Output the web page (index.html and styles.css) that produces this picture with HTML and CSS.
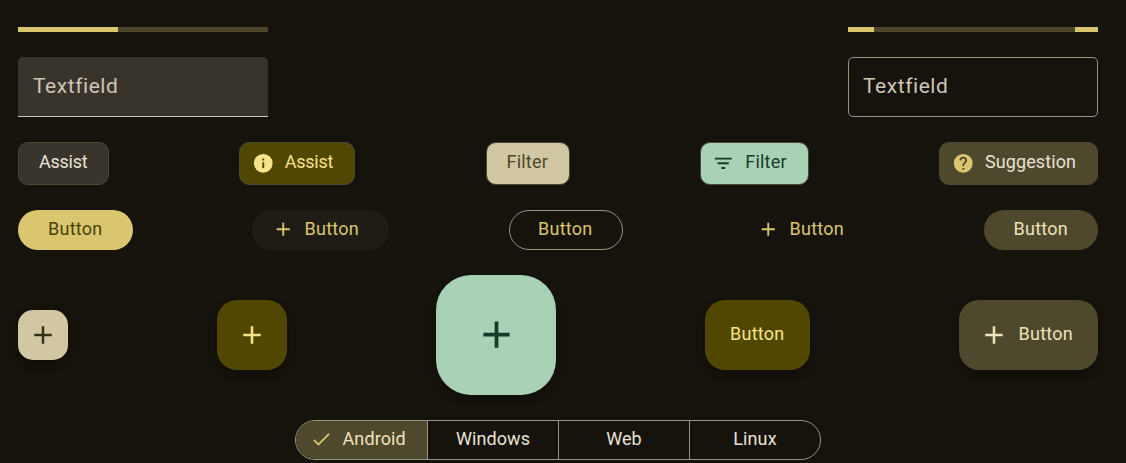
FILE: index.html
```html
<!DOCTYPE html>
<html lang="en">
<head>
<meta charset="utf-8">
<title>Components</title>
<link rel="stylesheet" href="styles.css">
</head>
<body>
<svg class="defs" aria-hidden="true">
  <symbol id="plus" viewBox="0 0 24 24"><path d="M19 13h-6v6h-2v-6H5v-2h6V5h2v6h6z"/></symbol>
  <symbol id="info" viewBox="0 0 24 24"><path fill-rule="evenodd" d="M12 2a10 10 0 1 0 0 20 10 10 0 0 0 0-20zm1 15h-2v-6h2v6zm0-8h-2V7h2v2z"/></symbol>
  <symbol id="help" viewBox="0 0 24 24"><path fill-rule="evenodd" d="M12 2a10 10 0 1 0 0 20 10 10 0 0 0 0-20zm1 17h-2v-2h2v2zm2.07-7.75-.9.92C13.45 12.9 13 13.5 13 15h-2v-.5c0-1.1.45-2.1 1.17-2.83l1.24-1.26c.37-.36.59-.86.59-1.41a2 2 0 0 0-4 0H8a4 4 0 0 1 8 0c0 .88-.36 1.68-.93 2.25z"/></symbol>
  <symbol id="filter" viewBox="0 0 24 24"><path d="M10 18h4v-2h-4v2zM3 6v2h18V6H3zm3 7h12v-2H6v2z"/></symbol>
  <symbol id="check" viewBox="0 0 24 24"><path d="M9 16.17 4.83 12l-1.42 1.41L9 19 21 7l-1.41-1.41z"/></symbol>
</svg>
<main class="page">
  <div class="row">
    <div class="progress"><i class="bar"></i></div>
    <div class="progress"><i class="bar start"></i><i class="bar end"></i></div>
  </div>
  <div class="row">
    <div class="field filled"><span>Textfield</span></div>
    <div class="field outlined"><span>Textfield</span></div>
  </div>
  <div class="row">
    <div class="chip assist"><span>Assist</span></div>
    <div class="chip assist-tinted"><svg><use href="#info"/></svg><span>Assist</span></div>
    <div class="chip filter"><span>Filter</span></div>
    <div class="chip filter-tinted"><svg><use href="#filter"/></svg><span>Filter</span></div>
    <div class="chip suggestion"><svg><use href="#help"/></svg><span>Suggestion</span></div>
  </div>
  <div class="row">
    <div class="button primary"><span>Button</span></div>
    <div class="button elevated"><svg><use href="#plus"/></svg><span>Button</span></div>
    <div class="button outline"><span>Button</span></div>
    <div class="button text"><svg><use href="#plus"/></svg><span>Button</span></div>
    <div class="button tonal"><span>Button</span></div>
  </div>
  <div class="row fabs">
    <div class="fab small"><svg><use href="#plus"/></svg></div>
    <div class="fab regular"><svg><use href="#plus"/></svg></div>
    <div class="fab large"><svg><use href="#plus"/></svg></div>
    <div class="fab label-only"><span>Button</span></div>
    <div class="fab extended"><svg><use href="#plus"/></svg><span>Button</span></div>
  </div>
  <div class="segments">
    <div class="segment selected"><svg><use href="#check"/></svg><span>Android</span></div>
    <div class="segment"><span>Windows</span></div>
    <div class="segment"><span>Web</span></div>
    <div class="segment"><span>Linux</span></div>
  </div>
</main>
</body>
</html>
```
FILE: styles.css
```css
* { box-sizing: border-box; }
body {
  margin: 0;
  height: 463px;
  overflow: hidden;
  background: #16130c;
  color: #e8e2d4;
  font: 450 18px/24px Roboto, sans-serif;
}
.defs { display: none; }
svg { flex: none; width: 22.5px; height: 22.5px; fill: currentColor; }
.page { display: flex; flex-direction: column; gap: 25px; padding: 27px 28px 0 18px; }
.row { display: flex; justify-content: space-between; }
.progress { display: flex; justify-content: space-between; width: 250px; height: 5px; background: #4c472b; }
.bar { width: 100px; background: #dac66f; }
.start { width: 25.5px; }
.end { width: 23px; }

.field { width: 250px; height: 60px; padding: 17px 15px; color: #cdc6b4; font-size: 21px; font-weight: 400; letter-spacing: .55px; }
.filled { background: #38342c; border-bottom: 1px solid #cdc6b4; border-radius: 5px 5px 0 0; }
.outlined { border: 1px solid #969180; border-radius: 5px; padding: 16px 14px; }

.chip { display: flex; align-items: center; height: 42.5px; padding: 0 20px; border: 1.25px solid #4b4739; border-radius: 10px; }
.chip span { margin-top: -3px; }
.button span, .fab span { margin-top: -1.5px; letter-spacing: .25px; }
.segment span { margin-top: -1.5px; letter-spacing: .1px; }
.chip svg { margin-right: 10.5px; }
.assist { width: 91px; background: #38342c; letter-spacing: -.25px; }
.assist-tinted { width: 116px; padding-left: 11.5px; background: #514700; color: #f7e388; letter-spacing: -.25px; }
.filter { width: 84px; background: #d1c7a2; color: #4c472b; font-weight: 400; letter-spacing: .2px; }
.filter-tinted { width: 109px; padding-left: 11.5px; background: #a8d1b6; color: #173b29; font-weight: 400; letter-spacing: .2px; }
.suggestion { width: 159px; padding-left: 12px; background: #4e482c; letter-spacing: .1px; }
.chip.suggestion svg { color: #dac66f; }

.button { display: flex; align-items: center; height: 40px; padding-left: 30px; width: 114.5px; border-radius: 20px; color: #dac66f; }
.button svg { margin-right: 10px; }
.primary { background: #dac66f; color: #4a410a; font-weight: 400; }
.elevated { width: 137px; padding-left: 20px; background: #1f1c15; }
.outline { padding-left: 28.5px; border: 1px solid #969180; }
.text { width: 121.5px; padding-left: 14.5px; }
.tonal { background: #4e482c; color: #eee2bc; }

.fabs { align-items: center; height: 120px; }
.fab { display: flex; align-items: center; justify-content: center; box-shadow: 0 4px 8px rgba(0, 0, 0, .3); }
.fab svg { width: 30px; height: 30px; }
.small { width: 50px; height: 50px; border-radius: 15px; background: #d1c7a2; color: #36301a; }
.regular { width: 70px; height: 70px; border-radius: 20px; background: #514700; color: #f7e388; }
.large { width: 120px; height: 120px; border-radius: 35px; background: #a8d1b6; color: #173b29; }
.large svg { width: 45px; height: 45px; }
.label-only { width: 104.5px; height: 70px; border-radius: 20px; background: #514700; color: #f7e388; }
.extended { width: 139.5px; height: 70px; justify-content: flex-start; gap: 10px; padding-left: 20px; border-radius: 20px; background: #4e482c; color: #eee2bc; }

.segments { display: grid; grid-template-columns: repeat(4, 1fr); align-self: center; width: 526px; height: 40px; overflow: hidden; border: 1px solid #969180; border-radius: 20px; }
.segment { display: flex; align-items: center; justify-content: center; }
.segment + .segment { border-left: 1px solid #969180; }
.segment.selected { justify-content: flex-start; gap: 10px; padding-left: 14px; background: #4e482c; color: #eee2bc; }
.selected svg { color: #dac66f; }
```
